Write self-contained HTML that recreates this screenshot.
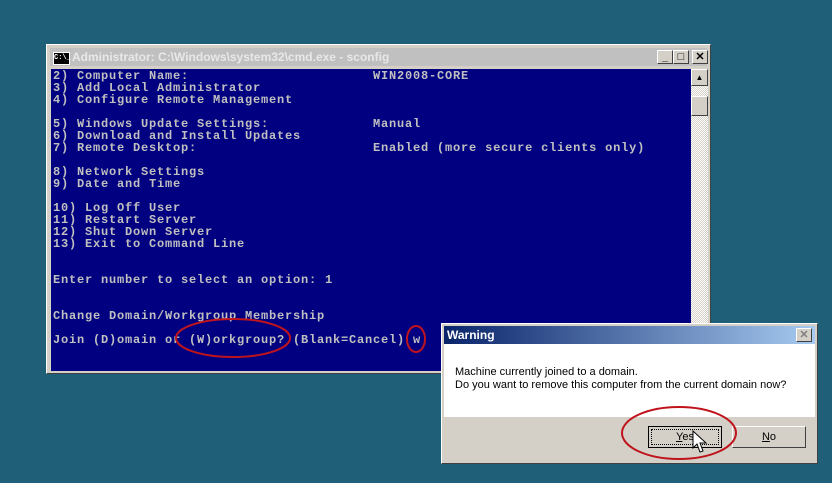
<!DOCTYPE html><html><head><style>
body{margin:0;width:832px;height:483px;background:#1f5f78;position:relative;overflow:hidden;font-family:"Liberation Sans",sans-serif}
.win{position:absolute;left:46px;top:44px;width:665px;height:330px;background:#d4d0c8;border:1px solid #fff;border-right-color:#404040;border-bottom-color:#404040;box-sizing:border-box}
.tb{position:absolute;left:3px;top:3px;right:3px;height:18px;background:#c0c0c0;color:#e8e8e8;font-weight:bold;font-size:12px;line-height:18px;padding-left:22px}
.ic{position:absolute;left:3px;top:4px;width:15px;height:11px;background:#000;border:1px solid #fff;color:#fff;font-size:7px;line-height:11px;font-family:"Liberation Mono",monospace}
.bt{position:absolute;top:5px;width:16px;height:14px;background:#d4d0c8;border:1px solid #fff;border-right-color:#404040;border-bottom-color:#404040;box-sizing:border-box;font-size:11px;color:#000;text-align:center;line-height:12px}
.con{position:absolute;left:4px;top:24px;width:640px;height:302px;background:#000080;color:#c0c0c0;font-family:"Liberation Mono",monospace;font-size:12px;font-weight:bold;letter-spacing:0.8px;line-height:12px;white-space:pre;padding:1px 0 0 2px;box-sizing:border-box}
.sb{position:absolute;left:644px;top:24px;width:17px;height:302px;background:repeating-conic-gradient(#d4d0c8 0 25%,#fff 0 50%) 0 0/2px 2px}
.sbb{position:absolute;left:0;width:17px;height:17px;background:#d4d0c8;border:1px solid #fff;border-right-color:#404040;border-bottom-color:#404040;box-sizing:border-box}
.dlg{position:absolute;left:441px;top:323px;width:377px;height:141px;background:#d4d0c8;border:1px solid #fff;border-right-color:#404040;border-bottom-color:#404040;box-sizing:border-box}
.dt{position:absolute;left:2px;top:2px;right:2px;height:18px;background:linear-gradient(90deg,#0a246a,#a6caf0);color:#fff;font-weight:bold;font-size:12px;line-height:18px;padding-left:3px}
.body{position:absolute;left:2px;top:20px;right:2px;height:73px;background:#fff;font-size:11px;color:#000;padding:22px 0 0 11px;box-sizing:border-box;line-height:13px}
.b{position:absolute;top:102px;width:74px;height:22px;background:#d4d0c8;border:1px solid #fff;border-right-color:#404040;border-bottom-color:#404040;box-sizing:border-box;font-size:11px;text-align:center;line-height:20px}
</style></head><body>
<div class="win"><div class="tb"><div class="ic">C:\_</div>Administrator: C:\Windows\system32\cmd.exe - sconfig
<div class="bt" style="left:607px;top:2px">_</div><div class="bt" style="left:623px;top:2px">□</div><div class="bt" style="left:642px;top:2px">✕</div></div>
<div class="con">2) Computer Name:                       WIN2008-CORE
3) Add Local Administrator
4) Configure Remote Management

5) Windows Update Settings:             Manual
6) Download and Install Updates
7) Remote Desktop:                      Enabled (more secure clients only)

8) Network Settings
9) Date and Time

10) Log Off User
11) Restart Server
12) Shut Down Server
13) Exit to Command Line


Enter number to select an option: 1


Change Domain/Workgroup Membership

Join (D)omain or (W)orkgroup? (Blank=Cancel) w</div>
<div class="sb"><div class="sbb" style="top:0;font-size:8px;text-align:center;line-height:15px">▲</div><div class="sbb" style="top:27px;height:20px"></div></div>
</div>
<div class="dlg"><div class="dt">Warning<div class="bt" style="left:352px;top:2px;color:#808080">✕</div></div>
<div class="body">Machine currently joined to a domain.<br>Do you want to remove this computer from the current domain now?</div>
<div class="b" style="left:206px;border:1px solid #000;outline:1px dotted #000;outline-offset:-4px"><u>Y</u>es</div>
<div class="b" style="left:290px"><u>N</u>o</div></div>
<svg width="832" height="483" style="position:absolute;left:0;top:0" fill="none" stroke="#c0141c" stroke-width="2">
<ellipse cx="233" cy="338" rx="57" ry="19"/><ellipse cx="416" cy="339" rx="9" ry="13"/><ellipse cx="679" cy="433" rx="57" ry="26"/>
<path d="M693 431 L693 448 L697 444 L700 452 L703 451 L700 443 L706 443 Z" fill="#fff" stroke="#000" stroke-width="1"/></svg>
</body></html>
